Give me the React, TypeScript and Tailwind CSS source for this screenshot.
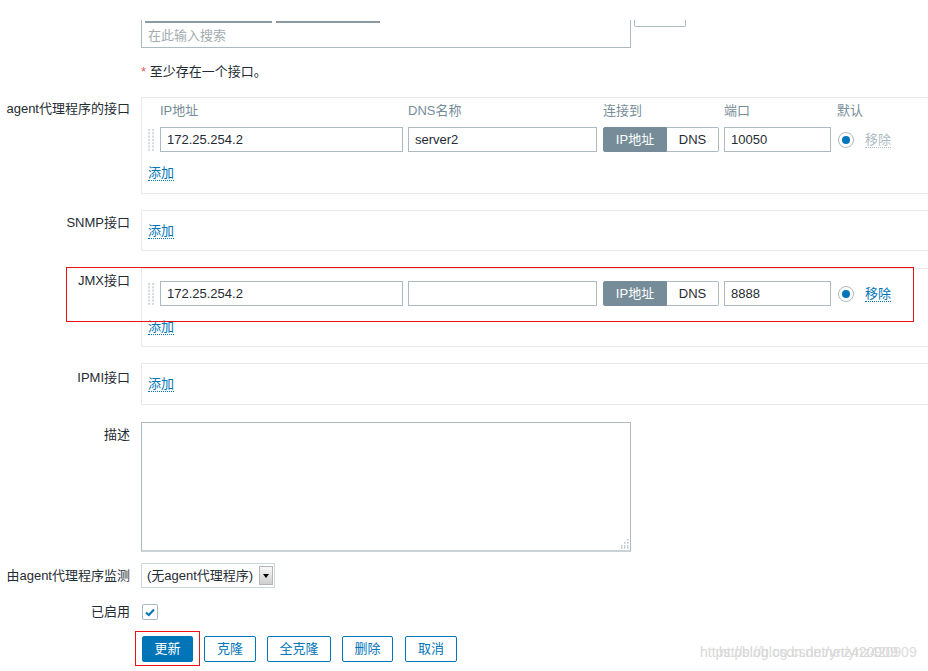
import React from "react";

const labelCls = "w-[130px] shrink-0 text-right text-[#1f2c33]";

function Handle() {
  const dots = [];
  for (let r = 0; r < 7; r++) {
    dots.push(<rect key={`a${r}`} x={0} y={r * 3.3} width={2} height={2} fill="#d3dade" />);
    dots.push(<rect key={`b${r}`} x={4} y={r * 3.3} width={2} height={2} fill="#d3dade" />);
  }
  return (
    <svg width="6" height="22" viewBox="0 0 6 22" className="shrink-0">
      {dots}
    </svg>
  );
}

function Link({ children, disabled }: { children: React.ReactNode; disabled?: boolean }) {
  return (
    <span
      className={`inline-block leading-[15px] border-b border-dotted ${
        disabled ? "text-[#acbbc2] border-[#acbbc2]" : "text-[#0275b8] border-[#0275b8]"
      }`}
    >
      {children}
    </span>
  );
}

function Radio() {
  return (
    <div className="w-4 h-4 rounded-full border border-[#acbbc2] bg-white flex items-center justify-center shrink-0">
      <div className="w-2 h-2 rounded-full bg-[#0275b8]" />
    </div>
  );
}

function IfaceRow({ ip, dns, port, removable }: { ip: string; dns: string; port: string; removable?: boolean }) {
  return (
    <div className="flex items-center h-[25px] pl-[6px]">
      <Handle />
      <div className="ml-[6px] w-[243px] h-[25px] border border-[#acbbc2] px-[6px] flex items-center">{ip}</div>
      <div className="ml-[5px] w-[189px] h-[25px] border border-[#acbbc2] px-[6px] flex items-center">{dns}</div>
      <div className="ml-[6px] flex h-[25px]">
        <div className="w-[64px] bg-[#768d99] border border-[#768d99] text-white flex items-center justify-center rounded-l-[2px]">
          IP地址
        </div>
        <div className="w-[52px] border border-l-0 border-[#acbbc2] flex items-center justify-center rounded-r-[2px]">DNS</div>
      </div>
      <div className="ml-[5px] w-[107px] h-[25px] border border-[#acbbc2] px-[6px] flex items-center">{port}</div>
      <div className="ml-[7px]">
        <Radio />
      </div>
      <div className="ml-[11px]">
        <Link disabled={!removable}>移除</Link>
      </div>
    </div>
  );
}

function Box({ children, className }: { children: React.ReactNode; className: string }) {
  return <div className={`w-[800px] border border-[#e6eaec] ${className}`}>{children}</div>;
}

export default function App() {
  return (
    <div className="relative w-[928px] h-[671px] overflow-hidden bg-white text-[13px] leading-4 text-[#1f2c33] font-['Liberation_Sans','Noto_Sans_CJK_SC',sans-serif]">
      <div className="flex flex-col pt-[20px]">
        {/* host groups multiselect, top cut off */}
        <div className="flex ml-[141px]">
          <div className="w-[490px] h-[28px] border-x border-b border-[#acbbc2]">
            <div className="flex gap-[4px] pl-[3px]">
              <div className="w-[127px] h-[2px] mt-[1px] bg-[#8a9ba4]" />
              <div className="w-[104px] h-[2px] mt-[1px] bg-[#8a9ba4]" />
            </div>
            <div className="pt-[5px] px-[6px] text-[#a3acb0]">在此输入搜索</div>
          </div>
          <div className="ml-[3px] w-[52px] h-[7px] border-x border-b border-[#acbbc2] rounded-b-[2px]" />
        </div>

        <div className="ml-[141px] mt-[16px]">
          <span className="text-[#e45959]">*</span> 至少存在一个接口。
        </div>

        {/* agent */}
        <div className="flex mt-[17px]">
          <div className={`${labelCls} pt-[4px]`}>agent代理程序的接口</div>
          <div className="ml-[11px]">
            <Box className="pt-[5px] pb-[12px]">
              <div className="flex pl-[18px] text-[#768d99]">
                <span className="w-[248px]">IP地址</span>
                <span className="w-[195px]">DNS名称</span>
                <span className="w-[121px]">连接到</span>
                <span className="w-[113px]">端口</span>
                <span>默认</span>
              </div>
              <div className="mt-[8px]">
                <IfaceRow ip="172.25.254.2" dns="server2" port="10050" />
              </div>
              <div className="mt-[13px] pl-[6px]">
                <Link>添加</Link>
              </div>
            </Box>
          </div>
        </div>

        {/* SNMP */}
        <div className="flex mt-[16px]">
          <div className={`${labelCls} pt-[5px]`}>SNMP接口</div>
          <div className="ml-[11px]">
            <Box className="pt-[12px] pb-[11px] pl-[6px]">
              <Link>添加</Link>
            </Box>
          </div>
        </div>

        {/* JMX */}
        <div className="relative flex mt-[17px]">
          <div className={`${labelCls} pt-[5px]`}>JMX接口</div>
          <div className="ml-[11px]">
            <Box className="pt-[12px] pb-[11px]">
              <IfaceRow ip="172.25.254.2" dns="" port="8888" removable />
              <div className="mt-[13px] pl-[6px]">
                <Link>添加</Link>
              </div>
            </Box>
          </div>
          <div className="absolute left-[66px] top-[-1px] w-[848px] h-[55px] border border-[#ee1111]" />
        </div>

        {/* IPMI */}
        <div className="flex mt-[16px]">
          <div className={`${labelCls} pt-[7px]`}>IPMI接口</div>
          <div className="ml-[11px]">
            <Box className="pt-[12px] pb-[12px] pl-[6px]">
              <Link>添加</Link>
            </Box>
          </div>
        </div>

        {/* description */}
        <div className="flex mt-[17px]">
          <div className={`${labelCls} pt-[5px]`}>描述</div>
          <div className="ml-[11px] w-[490px] h-[130px] border border-[#acbbc2] border-b-2 border-b-[#c9d2d6] flex items-end justify-end">
            <svg width="10" height="10" viewBox="0 0 10 10" className="mr-[1px] mb-[1px]">
              {[
                [8, 0], [8, 3], [5, 3], [8, 6], [5, 6], [2, 6], [8, 8], [5, 8], [2, 8],
              ].map(([x, y], i) => (
                <rect key={i} x={x} y={y} width={1.5} height={1.5} fill="#b8c2c7" />
              ))}
            </svg>
          </div>
        </div>

        {/* monitored by */}
        <div className="flex items-center mt-[11px]">
          <div className={labelCls}>由agent代理程序监测</div>
          <div className="ml-[11px] w-[134px] h-[25px] border border-[#cfd6d9] flex">
            <div className="flex-1 flex items-center pl-[5px]">(无agent代理程序)</div>
            <div className="w-[14px] my-[2px] mr-[1px] border border-[#b5b5b5] bg-gradient-to-b from-[#f8f8f8] to-[#cfcfcf] flex items-center justify-center">
              <div className="w-0 h-0 border-l-[3px] border-r-[3px] border-t-[4px] border-l-transparent border-r-transparent border-t-black" />
            </div>
          </div>
        </div>

        {/* enabled */}
        <div className="flex items-center mt-[16px]">
          <div className={labelCls}>已启用</div>
          <div className="ml-[12px] w-4 h-4 border border-[#acbbc2] rounded-[2px] flex items-center justify-center">
            <svg width="12" height="12" viewBox="0 0 12 12">
              <polyline points="2,6.5 4.8,9 10,3.5" fill="none" stroke="#0275b8" strokeWidth="2" />
            </svg>
          </div>
        </div>

        {/* buttons */}
        <div className="flex mt-[16px] ml-[142px] gap-[11px]">
          <div className="relative">
            <button className="w-[51px] h-[26px] rounded-[2px] border border-[#0275b8] bg-[#0275b8] text-white">更新</button>
            <div className="absolute left-[-7px] top-[-5px] w-[65px] h-[35px] border border-[#ee1111]" />
          </div>
          <button className="w-[52px] h-[26px] rounded-[2px] border border-[#0275b8] bg-white text-[#0275b8]">克隆</button>
          <button className="w-[64px] h-[26px] rounded-[2px] border border-[#0275b8] bg-white text-[#0275b8]">全克隆</button>
          <button className="w-[51px] h-[26px] rounded-[2px] border border-[#0275b8] bg-white text-[#0275b8]">删除</button>
          <button className="ml-[1px] w-[52px] h-[26px] rounded-[2px] border border-[#0275b8] bg-white text-[#0275b8]">取消</button>
        </div>
      </div>

      {/* watermark */}
      <div className="absolute left-[700px] top-[644px] text-[14px] text-[#d8d8d8] whitespace-nowrap [text-shadow:19px_0_0_#dcdcdc]">
        https://blog.csdn.net/ynz420909
      </div>
    </div>
  );
}
